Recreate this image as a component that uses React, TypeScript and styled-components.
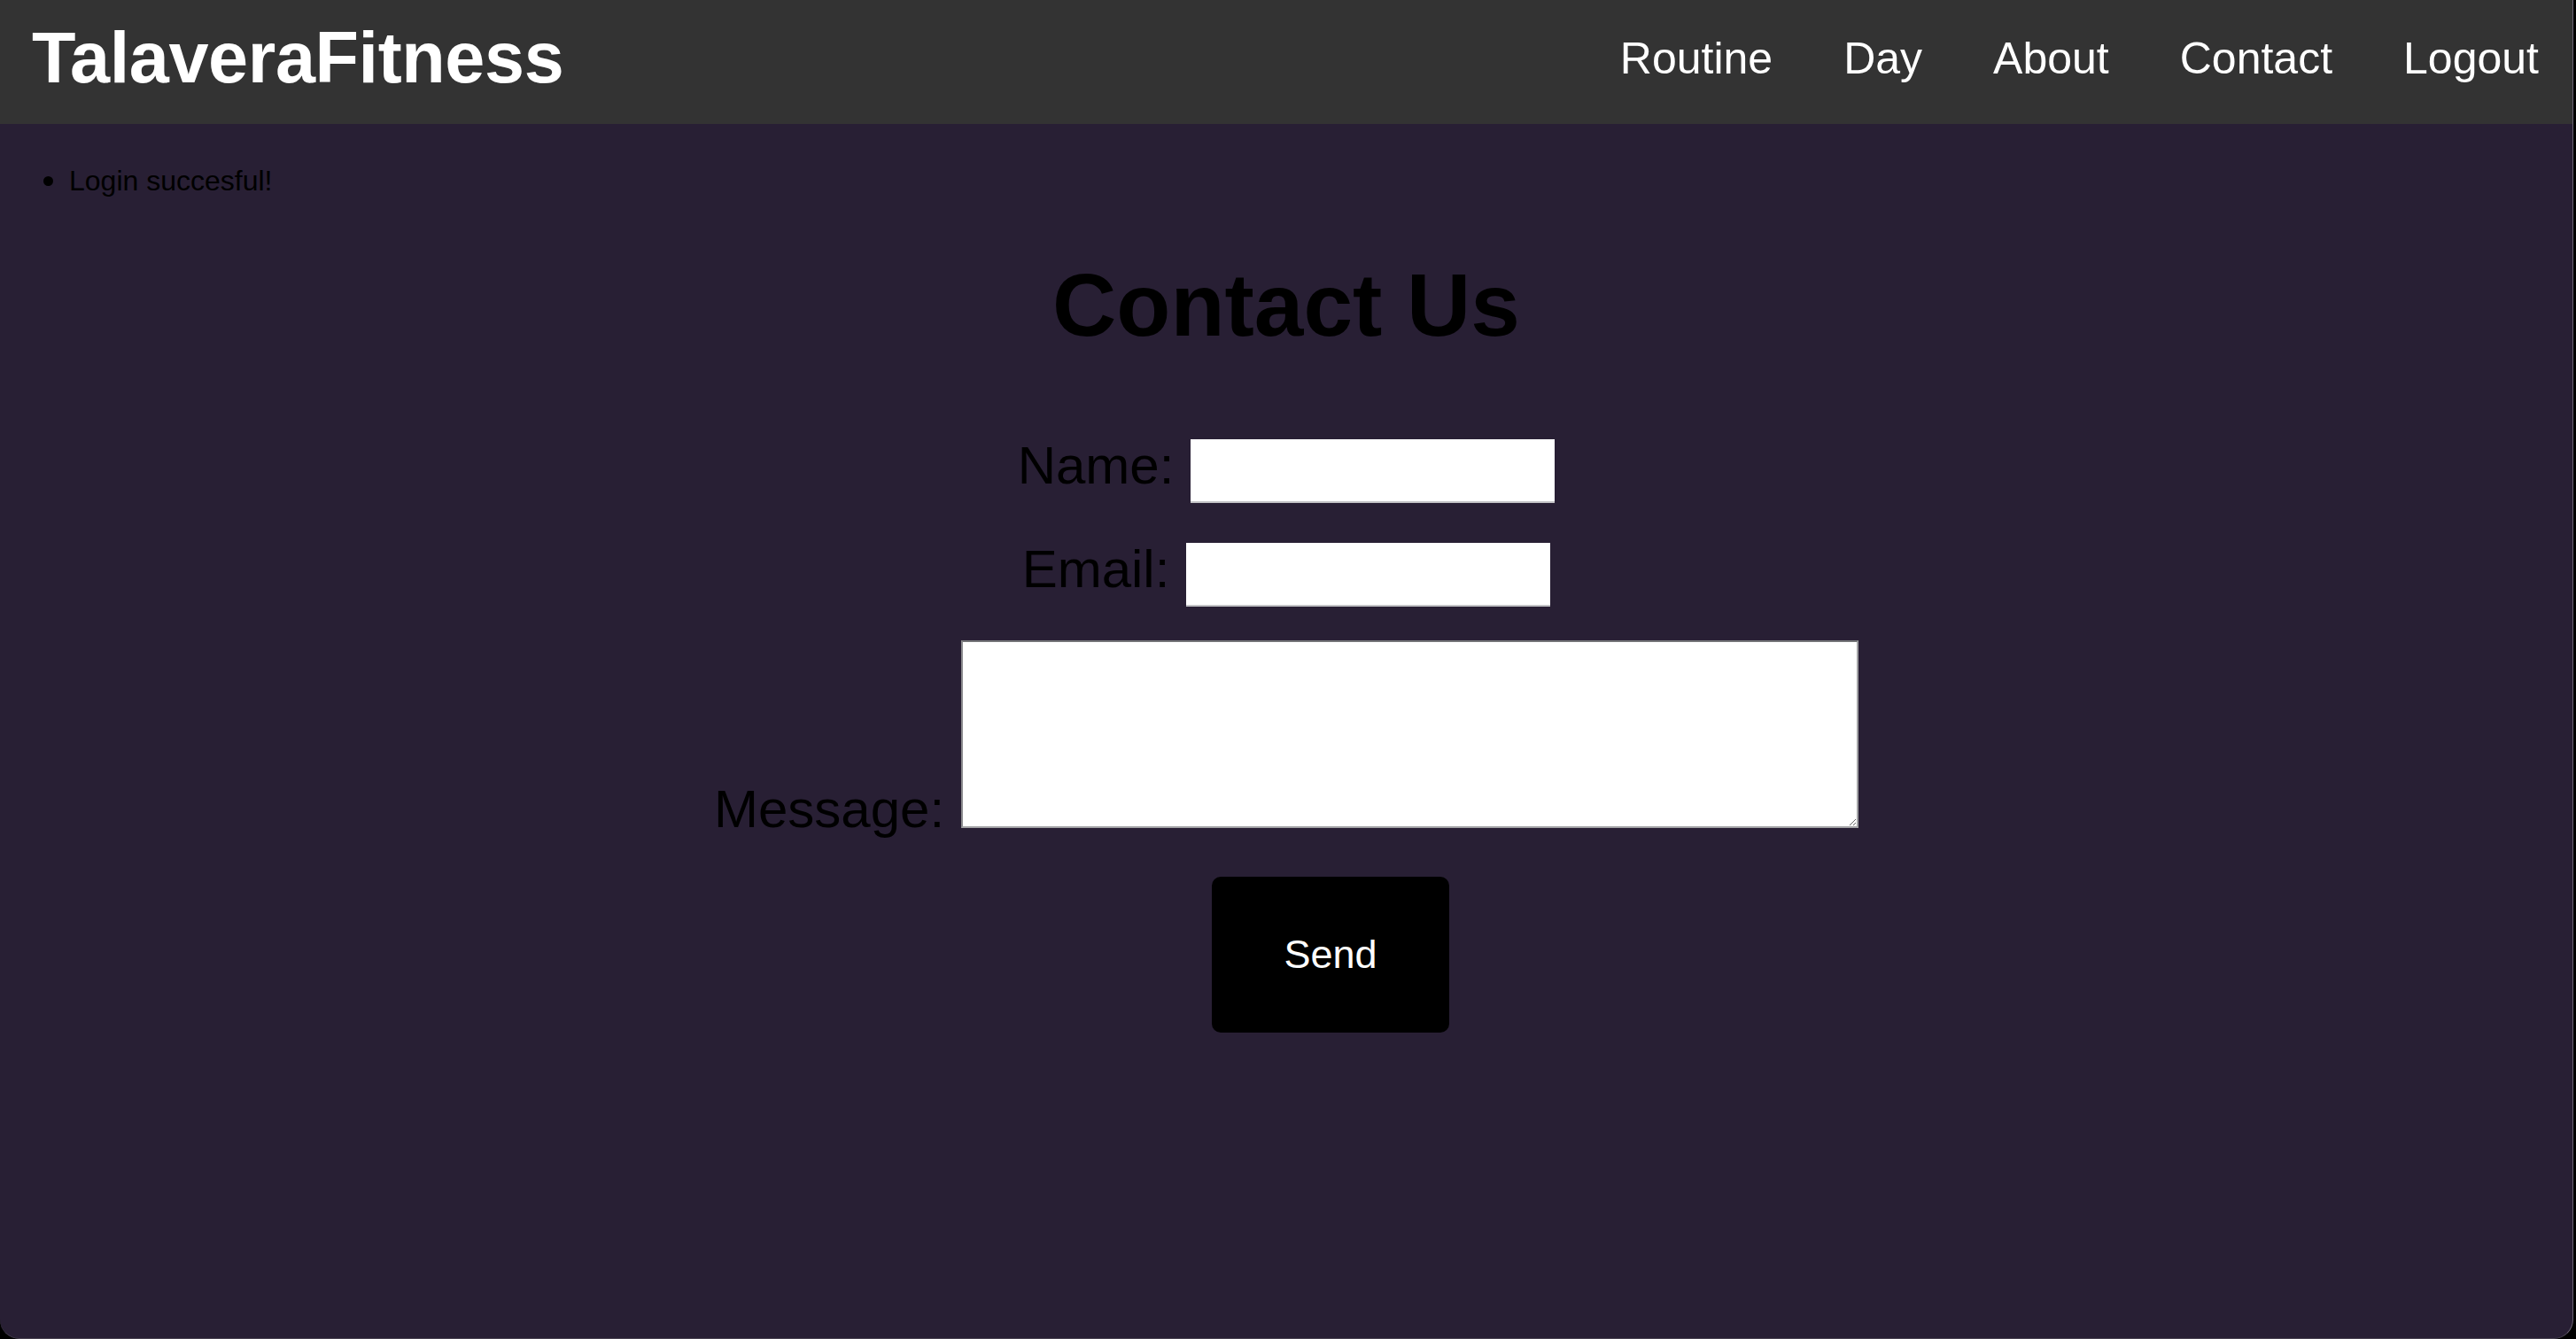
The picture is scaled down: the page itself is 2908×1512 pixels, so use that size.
import React from "react";
import styled, { createGlobalStyle } from "styled-components";

const GlobalStyle = createGlobalStyle`
  html, body {
    margin: 0;
    padding: 0;
    background: #000;
  }
  body {
    font-family: "Liberation Sans", Arial, Helvetica, sans-serif;
  }
  * { box-sizing: border-box; }
`;

const Frame = styled.div`
  width: 2905px;
  height: 1512px;
  background: #281f34;
  border-radius: 0 0 22px 22px;
  border-right: 1px solid #6a6372;
  border-bottom: 1px solid #4a4452;
  overflow: hidden;
  display: flex;
  flex-direction: column;
`;

const Header = styled.header`
  height: 140px;
  flex: 0 0 140px;
  background: #333333;
  display: flex;
  align-items: center;
  justify-content: space-between;
  padding: 0 38px 8px 36px;
`;

const Logo = styled.div`
  color: #ffffff;
  font-size: 81px;
  font-weight: 700;
  letter-spacing: -0.4px;
  margin-bottom: 2px;
`;

const Nav = styled.nav`
  display: flex;
  align-items: center;
  gap: 80px;
`;

const NavLink = styled.a`
  color: #ffffff;
  font-size: 50px;
  text-decoration: none;
  cursor: pointer;
`;

const Flash = styled.ul`
  margin: 44px 0 0;
  padding: 0 0 0 78px;
  font-size: 32px;
  color: #000;
`;

const FlashItem = styled.li`
  height: 37px;
  line-height: 37px;

  &::marker {
    font-size: 38px;
  }
`;

const Title = styled.h1`
  margin: 66px 0 0;
  text-align: center;
  font-size: 100px;
  font-weight: 700;
  color: #000;
  line-height: normal;
`;

const Form = styled.form`
  display: flex;
  flex-direction: column;
  align-items: center;
  margin-top: 89px;
`;

const Row = styled.div<{ $top?: number }>`
  display: flex;
  align-items: flex-end;
  justify-content: center;
  gap: 19px;
  margin-top: ${(p) => p.$top ?? 0}px;
`;

const Label = styled.label<{ $drop?: number }>`
  font-size: 60px;
  color: #000;
  line-height: normal;
  margin-bottom: ${(p) => p.$drop ?? 8}px;
`;

const TextInput = styled.input`
  width: 411px;
  height: 72px;
  border: none;
  border-bottom: 2px solid #c3c3c6;
  background: #ffffff;
  font-size: 27px;
  padding: 0 6px;
  outline: none;
`;

const MessageBox = styled.textarea`
  display: block;
  width: 1013px;
  height: 212px;
  background: #ffffff;
  border: 2px solid #a3a3a6;
  border-top-color: #747477;
  border-left-color: #8d8d90;
  font-size: 27px;
  padding: 4px;
  outline: none;
`;

const ButtonRow = styled.div`
  display: flex;
  justify-content: center;
  padding-left: 100px;
  margin-top: 55px;
`;

const SendButton = styled.button`
  width: 268px;
  height: 176px;
  background: #000000;
  color: #ffffff;
  border: none;
  border-radius: 10px;
  font-family: "Liberation Sans", Arial, sans-serif;
  font-size: 45px;
  cursor: pointer;
`;

export default function App() {
  return (
    <>
      <GlobalStyle />
      <Frame>
        <Header>
          <Logo>TalaveraFitness</Logo>
          <Nav>
            <NavLink>Routine</NavLink>
            <NavLink>Day</NavLink>
            <NavLink>About</NavLink>
            <NavLink>Contact</NavLink>
            <NavLink>Logout</NavLink>
          </Nav>
        </Header>
        <Flash>
          <FlashItem>Login succesful!</FlashItem>
        </Flash>
        <Title>Contact Us</Title>
        <Form onSubmit={(e) => e.preventDefault()}>
          <Row>
            <Label htmlFor="name">Name:</Label>
            <TextInput id="name" type="text" />
          </Row>
          <Row $top={40}>
            <Label htmlFor="email">Email:</Label>
            <TextInput id="email" type="email" />
          </Row>
          <Row $top={38}>
            <Label htmlFor="message" $drop={-13}>
              Message:
            </Label>
            <MessageBox id="message" />
          </Row>
        </Form>
        <ButtonRow>
          <SendButton type="button">Send</SendButton>
        </ButtonRow>
      </Frame>
    </>
  );
}
